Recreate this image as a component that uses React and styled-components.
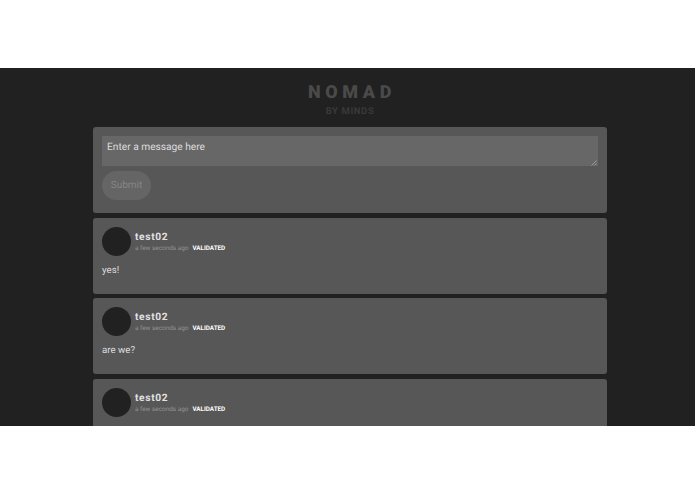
import React from 'react'
import styled, { createGlobalStyle } from 'styled-components'

const GlobalStyle = createGlobalStyle`
    html, body {
        margin: 0;
        background: #fff;
    }
    body {
        font-family: Roboto, "Liberation Sans", sans-serif;
        text-rendering: geometricPrecision;
    }
`

const posts = [
    { id: 1, user: 'test02', text: 'yes!' },
    { id: 2, user: 'test02', text: 'are we?' },
    { id: 3, user: 'test02' },
]

const App = () => {
    return (
        <Screen>
            <GlobalStyle />
            <Header>
                <Logo>NOMAD</Logo>
                <Tagline>BY MINDS</Tagline>
            </Header>
            <Feed>
                <Composer>
                    <InputWrap>
                        <Input placeholder="Enter a message here" />
                        <Grip viewBox="0 0 6 6">
                            <path d="M0.5 5.5L5.5 0.5M3.5 5.5L5.5 3.5" stroke="#a8a8a8" strokeWidth="0.8" />
                        </Grip>
                    </InputWrap>
                    <Submit type="button">Submit</Submit>
                </Composer>
                {posts.map((post) => (
                    <Post key={post.id}>
                        <PostHead>
                            <Avatar />
                            <Meta>
                                <Username>{post.user}</Username>
                                <MetaRow>
                                    <Time>a few seconds ago</Time>
                                    <Status>VALIDATED</Status>
                                </MetaRow>
                            </Meta>
                        </PostHead>
                        {post.text && <Message>{post.text}</Message>}
                    </Post>
                ))}
            </Feed>
        </Screen>
    )
}

export default App

const Screen = styled.div`
    box-sizing: border-box;
    margin-top: 68px;
    height: 358px;
    padding-left: 5px;
    overflow: hidden;
    background: #212121;
`

const Header = styled.header`
    height: 59px;
    padding-top: 14px;
    box-sizing: border-box;
    text-align: center;
`

const Logo = styled.h1`
    margin: 0;
    padding-left: 4px;
    font-size: 18px;
    line-height: 21px;
    font-weight: 900;
    letter-spacing: 4.6px;
    color: #4a4a4a;
`

const Tagline = styled.div`
    margin-top: 3px;
    font-size: 9.5px;
    line-height: 12px;
    font-weight: 700;
    letter-spacing: 0.6px;
    color: #393939;
`

const Feed = styled.main`
    width: 514px;
    margin: 0 auto;
    display: flex;
    flex-direction: column;
    gap: 4.4px;
`

const Card = styled.section`
    box-sizing: border-box;
    background: #575757;
    border-radius: 3px;
    padding: 9px;
    flex-shrink: 0;
`

const Composer = styled(Card)`
    height: 86.4px;
`

const InputWrap = styled.div`
    position: relative;
`

const Input = styled.textarea`
    display: block;
    box-sizing: border-box;
    width: 100%;
    height: 30px;
    padding: 5px 5px 3px;
    border: 0;
    outline: 0;
    resize: none;
    background: #676767;
    color: #ddd;
    font-family: inherit;
    font-size: 10.2px;
    line-height: 13px;
    text-rendering: geometricPrecision;

    &::placeholder {
        color: #dcdcdc;
        opacity: 1;
    }
`

const Grip = styled.svg`
    position: absolute;
    right: 1px;
    bottom: 0;
    width: 6px;
    height: 6px;
`

const Submit = styled.button`
    display: block;
    width: 49px;
    height: 29px;
    margin-top: 5px;
    padding: 0;
    border: 0;
    border-radius: 15px;
    background: #656565;
    color: #858585;
    font-family: inherit;
    font-size: 10px;
    text-rendering: geometricPrecision;
`

const Post = styled(Card)`
    height: 76px;
`

const PostHead = styled.div`
    display: flex;
    align-items: center;
    gap: 4px;
`

const Avatar = styled.div`
    width: 29px;
    height: 29px;
    border-radius: 50%;
    background: #212121;
`

const Meta = styled.div`
    display: flex;
    flex-direction: column;
    padding-top: 2px;
`

const Username = styled.div`
    font-size: 10.2px;
    line-height: 12px;
    font-weight: 700;
    letter-spacing: 0.65px;
    color: #e2e2e2;
`

const MetaRow = styled.div`
    display: flex;
    align-items: center;
    gap: 4px;
`

const Time = styled.span`
    font-size: 6.4px;
    line-height: 9px;
    color: #939393;
`

const Status = styled.span`
    font-size: 6.3px;
    line-height: 9px;
    font-weight: 700;
    color: #fff;
`

const Message = styled.p`
    margin: 8px 0 0;
    font-size: 9.7px;
    line-height: 13px;
    color: #dedede;
`
